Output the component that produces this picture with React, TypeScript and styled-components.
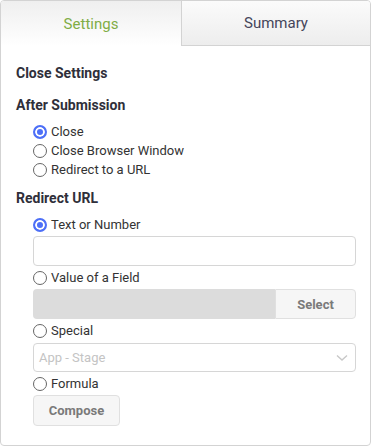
import React from "react";
import styled, { createGlobalStyle } from "styled-components";

const Global = createGlobalStyle`
  html, body { margin: 0; padding: 0; background: #fff; }
  body { font-family: Roboto, "Liberation Sans", Arial, sans-serif; color: #333; }
  * { box-sizing: border-box; }
`;

const Panel = styled.div`
  width: 371px;
  height: 446px;
  border: 1px solid #d3d3d3;
  border-radius: 4px;
  overflow: hidden;
  display: flex;
  flex-direction: column;
  background: #fff;
`;

const Tabs = styled.div`
  display: flex;
  height: 45px;
  flex: 0 0 45px;
`;

const Tab = styled.div<{ $active?: boolean }>`
  display: flex;
  align-items: center;
  justify-content: center;
  font-size: 15px;
  ${(p) =>
    p.$active
      ? `flex: 0 0 180px;
         color: #80ad45;
         background: linear-gradient(#efefef, #ffffff);`
      : `flex: 1;
         color: #45455a;
         border-left: 1px solid #d3d3d3;
         border-bottom: 1px solid #d3d3d3;
         background: linear-gradient(#fbfbfb, #ededed);`}
`;

const Content = styled.div`
  padding: 17px 14px 0 15px;
  display: flex;
  flex-direction: column;
`;

const Heading = styled.div<{ $mt?: number }>`
  font-size: 14px;
  font-weight: 700;
  line-height: 20px;
  color: #2f2f3a;
  margin-top: ${(p) => p.$mt ?? 0}px;
`;

const Group = styled.div<{ $mt?: number }>`
  display: flex;
  flex-direction: column;
  padding-left: 17px;
  margin-top: ${(p) => p.$mt ?? 0}px;
`;

const RadioRow = styled.label<{ $mt?: number }>`
  display: flex;
  align-items: center;
  height: 19px;
  font-size: 13px;
  color: #333;
  gap: 4px;
  margin-top: ${(p) => p.$mt ?? 0}px;
`;

const Radio = styled.span<{ $checked?: boolean }>`
  width: 14px;
  height: 14px;
  border-radius: 50%;
  flex: 0 0 14px;
  border: 1px solid ${(p) => (p.$checked ? "#4d6ff7" : "#666")};
  background: ${(p) => (p.$checked ? "#4d6ff7" : "#fff")};
  box-shadow: ${(p) => (p.$checked ? "inset 0 0 0 2px #fff" : "none")};
  ${(p) => (p.$checked ? "border-width: 2px;" : "")}
`;

const TextInput = styled.div`
  height: 30px;
  border: 1px solid #d6d6d6;
  border-radius: 4px;
  margin-top: 2px;
  background: #fff;
`;

const FieldRow = styled.div`
  display: flex;
  height: 30px;
  margin-top: 2px;
`;

const DisabledInput = styled.div`
  flex: 1;
  background: #dcdcdc;
  border-radius: 4px 0 0 4px;
`;

const Button = styled.div<{ $w?: number; $h?: number }>`
  display: flex;
  align-items: center;
  justify-content: center;
  height: ${(p) => p.$h ?? 30}px;
  width: ${(p) => p.$w ?? 81}px;
  border: 1px solid #e0e0e0;
  background: #f6f6f6;
  color: #7a7a7a;
  font-weight: 700;
  font-size: 13px;
  border-radius: 4px;
`;

const SideButton = styled(Button)`
  border-radius: 0 4px 4px 0;
`;

const Dropdown = styled.div`
  height: 29px;
  margin-top: 3px;
  border: 1px solid #d6d6d6;
  border-radius: 4px;
  display: flex;
  align-items: center;
  justify-content: space-between;
  padding: 0 7px 0 5px;
  font-size: 13px;
  color: #c4c4c4;
`;

const ComposeWrap = styled.div`
  margin-top: 2px;
`;

export default function App() {
  return (
    <>
      <Global />
      <Panel>
        <Tabs>
          <Tab $active>Settings</Tab>
          <Tab>Summary</Tab>
        </Tabs>
        <Content>
          <Heading>Close Settings</Heading>
          <Heading $mt={12}>After Submission</Heading>
          <Group $mt={7}>
            <RadioRow>
              <Radio $checked />
              Close
            </RadioRow>
            <RadioRow>
              <Radio />
              Close Browser Window
            </RadioRow>
            <RadioRow>
              <Radio />
              Redirect to a URL
            </RadioRow>
          </Group>
          <Heading $mt={9}>Redirect URL</Heading>
          <Group $mt={7}>
            <RadioRow>
              <Radio $checked />
              Text or Number
            </RadioRow>
            <TextInput />
            <RadioRow $mt={2}>
              <Radio />
              Value of a Field
            </RadioRow>
            <FieldRow>
              <DisabledInput />
              <SideButton>Select</SideButton>
            </FieldRow>
            <RadioRow $mt={2}>
              <Radio />
              Special
            </RadioRow>
            <Dropdown>
              App - Stage
              <svg width="12" height="8" viewBox="0 0 12 8">
                <path d="M1 1.5 L6 6 L11 1.5" fill="none" stroke="#c8c8c8" strokeWidth="1.4" />
              </svg>
            </Dropdown>
            <RadioRow $mt={2}>
              <Radio />
              Formula
            </RadioRow>
            <ComposeWrap>
              <Button $w={87} $h={31}>Compose</Button>
            </ComposeWrap>
          </Group>
        </Content>
      </Panel>
    </>
  );
}
